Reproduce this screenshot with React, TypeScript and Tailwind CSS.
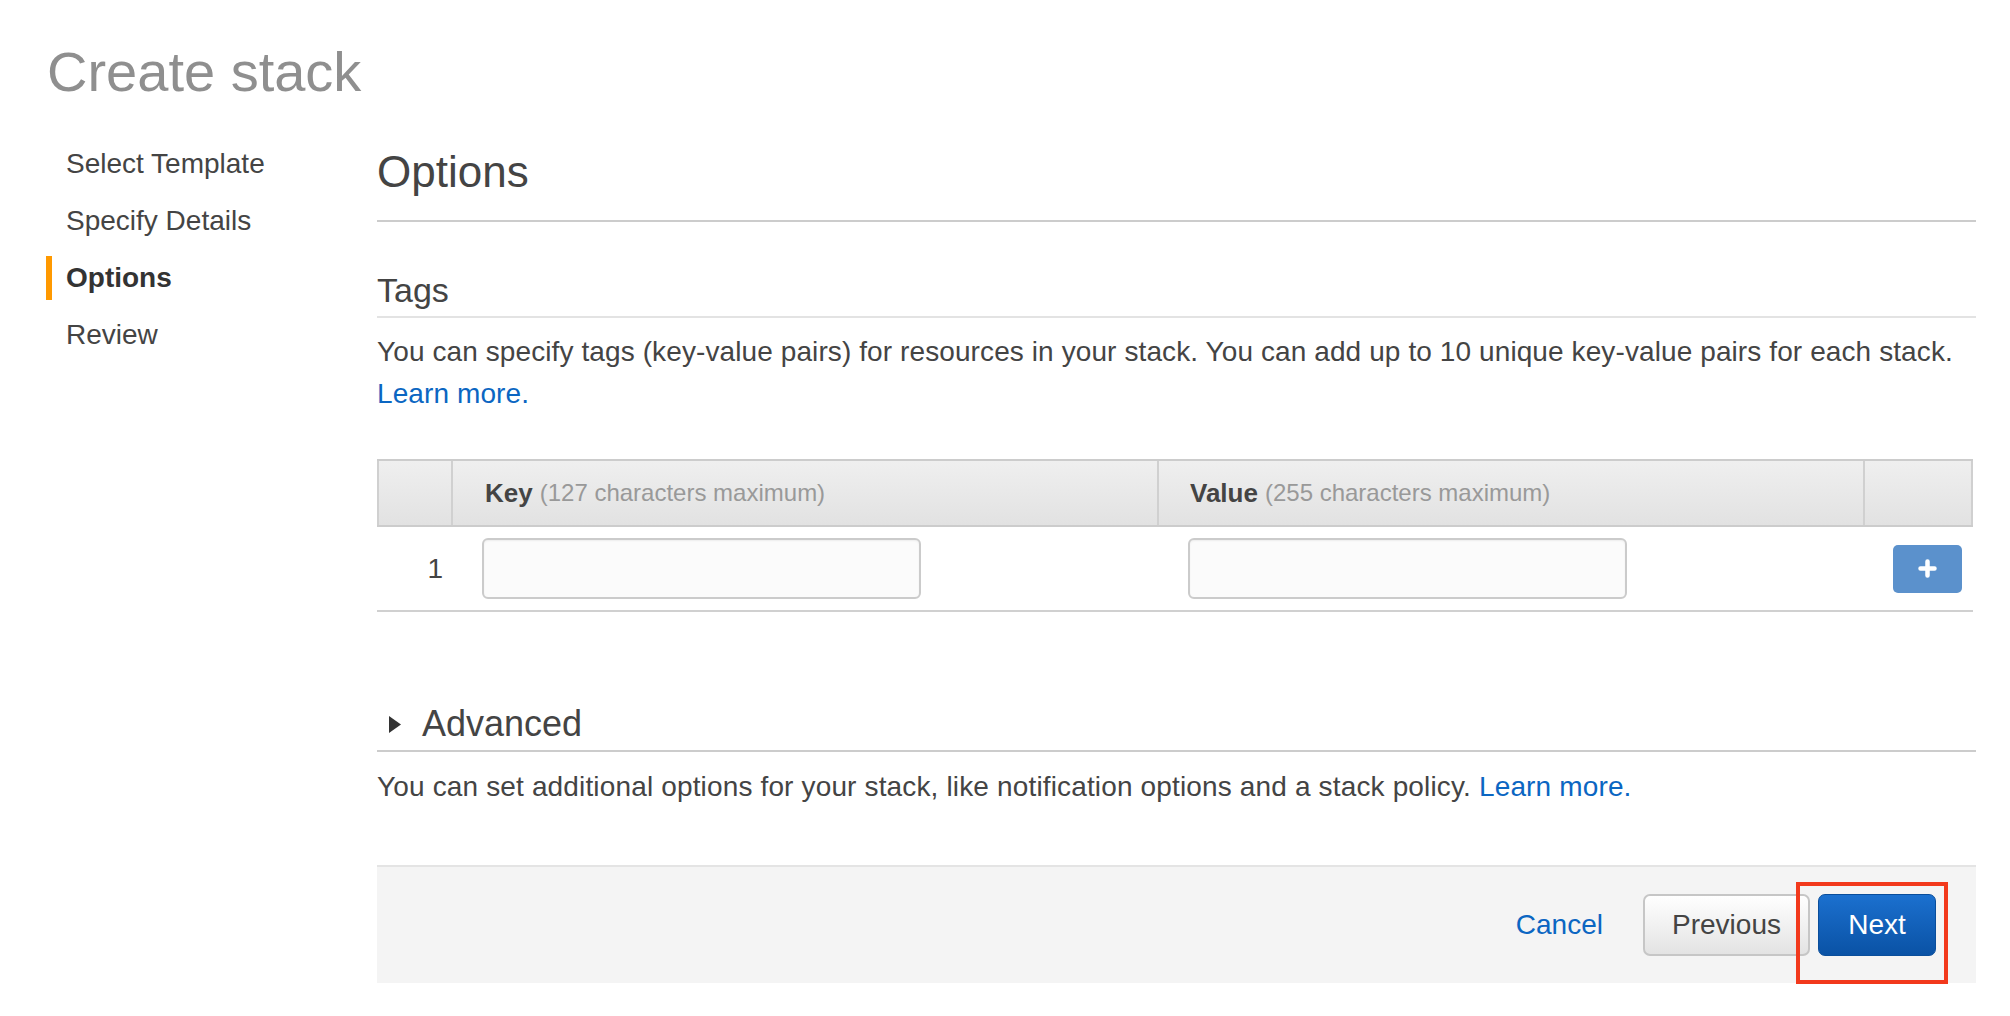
import React from "react";

const steps = ["Select Template", "Specify Details", "Options", "Review"];

const App: React.FC = () => {
  return (
    <div className="min-h-screen w-full bg-white font-['Liberation_Sans',Arial,sans-serif] text-[#444]">
      <h1 className="pl-[47px] pt-[44px] text-[56px] leading-[56px] text-[#8f8f8f]">Create stack</h1>

      <div className="flex items-start">
        {/* wizard steps */}
        <nav className="w-[377px] shrink-0 pl-[46px] pt-[35px]">
          {steps.map((s) => (
            <div key={s} className="flex h-[57px] items-center">
              <span className={s === "Options" ? "h-[44px] w-[6px] bg-[#ff9900]" : "h-[44px] w-[6px]"} />
              <span
                className={
                  s === "Options"
                    ? "ml-[14px] text-[28px] font-bold leading-[57px] text-[#333]"
                    : "ml-[14px] text-[28px] leading-[57px] text-[#444]"
                }
              >
                {s}
              </span>
            </div>
          ))}
        </nav>

        <main className="w-[1599px] shrink-0 pt-[50px]">
          <h2 className="border-b-2 border-[#cccccc] pb-[26px] text-[44px] leading-[44px]">Options</h2>

          {/* Tags */}
          <h3 className="mt-[51px] border-b-2 border-[#e3e3e3] pb-[9px] text-[34px] leading-[34px]">Tags</h3>
          <p className="mt-[13px] text-[28px] leading-[42px] tracking-[0.1px]">
            You can specify tags (key-value pairs) for resources in your stack. You can add up to 10 unique key-value pairs for each stack.
            <br />
            <a className="text-[#0b66c2]">Learn more.</a>
          </p>

          <div className="mt-[44px] w-[1596px]">
            <div className="grid h-[68px] grid-cols-[76px_706px_706px_108px] border-y-2 border-[#cccccc] bg-linear-to-b from-[#efefef] to-[#e2e2e2]">
              <div className="border-x-2 border-[#d0d0d0]" />
              <div className="flex items-center border-r-2 border-[#d0d0d0] pl-[32px]">
                <span className="text-[26px] font-bold text-[#444]">Key</span>
                <span className="ml-[7px] text-[24px] text-[#999]">(127 characters maximum)</span>
              </div>
              <div className="flex items-center border-r-2 border-[#d0d0d0] pl-[31px]">
                <span className="text-[26px] font-bold text-[#444]">Value</span>
                <span className="ml-[7px] text-[24px] text-[#999]">(255 characters maximum)</span>
              </div>
              <div className="border-r-2 border-[#d0d0d0]" />
            </div>

            <div className="grid h-[85px] grid-cols-[76px_706px_706px_108px] items-center border-b-2 border-[#d0d0d0]">
              <div className="pr-[10px] text-right text-[28px]">1</div>
              <div className="pl-[29px]">
                <input className="h-[61px] w-[439px] rounded-[6px] border-2 border-[#cbcbcb] bg-[#fbfbfb] shadow-[inset_0_1px_2px_rgba(0,0,0,0.06)] outline-none" />
              </div>
              <div className="pl-[29px]">
                <input className="h-[61px] w-[439px] rounded-[6px] border-2 border-[#cbcbcb] bg-[#fbfbfb] shadow-[inset_0_1px_2px_rgba(0,0,0,0.06)] outline-none" />
              </div>
              <div className="pl-[28px]">
                <button className="flex h-[48px] w-[69px] items-center justify-center rounded-[5px] bg-[#5b91cc]">
                  <svg width="19" height="19" viewBox="0 0 19 19">
                    <path d="M9.5 2.5v14M2.5 9.5h14" stroke="#fff" strokeWidth="4.5" strokeLinecap="round" />
                  </svg>
                </button>
              </div>
            </div>
          </div>

          {/* Advanced */}
          <div className="mt-[92px] flex items-center border-b-2 border-[#cccccc] pb-[6px]">
            <svg className="ml-[12px]" width="12" height="17" viewBox="0 0 12 17">
              <path d="M0 0L12 8.5L0 17Z" fill="#333" />
            </svg>
            <span className="ml-[21px] text-[36px] leading-[40px]">Advanced</span>
          </div>
          <p className="mt-[14px] text-[28px] leading-[42px] tracking-[0.15px]">
            You can set additional options for your stack, like notification options and a stack policy.{" "}
            <a className="text-[#0b66c2]">Learn more.</a>
          </p>

          {/* footer */}
          <div className="mt-[57px] flex h-[118px] items-center justify-end border-t-2 border-[#e4e4e4] bg-[#f4f4f4] pr-[40px]">
            <a className="text-[28px] text-[#0b66c2]">Cancel</a>
            <button className="ml-[40px] h-[62px] w-[167px] rounded-[7px] border-2 border-[#c6c6c6] bg-linear-to-b from-white to-[#e3e3e3] text-[28px] text-[#444]">
              Previous
            </button>
            <div className="relative ml-[8px]">
              <button className="h-[62px] w-[118px] rounded-[7px] border border-[#0a4e9b] bg-linear-to-b from-[#1b70cf] to-[#0a52a5] text-[28px] text-white">
                Next
              </button>
              <div className="absolute -top-[12px] -right-[12px] -bottom-[28px] -left-[22px] border-4 border-[#f2391c]" />
            </div>
          </div>
        </main>
      </div>
    </div>
  );
};

export default App;
